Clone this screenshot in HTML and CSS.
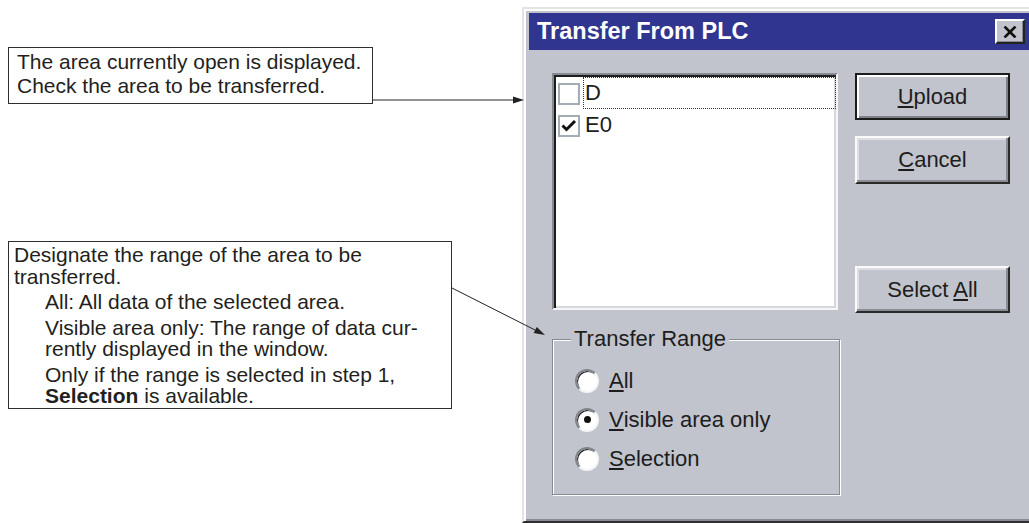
FILE: index.html
```html
<!DOCTYPE html>
<html lang="en">
<head>
    <meta charset="UTF-8">
    <meta name="viewport" content="width=device-width, initial-scale=1.0">
    <title>Transfer From PLC</title>
    <link rel="stylesheet" href="styles.css">
</head>
<body>
    <div class="page">
        <!-- callouts on the left -->
        <div class="notes">
            <div class="note note-area">
                <p>The area currently open is displayed.</p>
                <p>Check the area to be transferred.</p>
            </div>
            <div class="note note-range">
                <p>Designate the range of the area to be<br>transferred.</p>
                <p class="sub">All: All data of the selected area.</p>
                <p class="sub">Visible area only: The range of data cur-<br>rently displayed in the window.</p>
                <p class="sub">Only if the range is selected in step 1,<br><b>Selection</b> is available.</p>
            </div>
        </div>

        <!-- the dialog -->
        <div class="dialog">
            <div class="titlebar">
                <span class="title">Transfer From PLC</span>
                <button class="close-btn" aria-label="Close">
                    <svg width="14" height="12" viewBox="0 0 14 12"><path d="M1.5 0.5 L12.5 11.5 M12.5 0.5 L1.5 11.5" stroke="#111" stroke-width="2.6"/></svg>
                </button>
            </div>
            <div class="dialog-body">
                <div class="left-col">
                    <div class="listbox">
                        <div class="list-item">
                            <span class="check"></span>
                            <span class="item-text focused">D</span>
                        </div>
                        <div class="list-item">
                            <span class="check">
                                <svg width="18" height="18" viewBox="0 0 18 18"><path d="M2.5 8.5 L6.5 12.5 L15 4" fill="none" stroke="#111" stroke-width="3"/></svg>
                            </span>
                            <span class="item-text">E0</span>
                        </div>
                    </div>
                    <fieldset class="range">
                        <legend>Transfer Range</legend>
                        <div class="radios">
                            <label class="radio"><span class="radio-dot"></span><u>A</u>ll</label>
                            <label class="radio"><span class="radio-dot on"></span><u>V</u>isible area only</label>
                            <label class="radio"><span class="radio-dot"></span><u>S</u>election</label>
                        </div>
                    </fieldset>
                </div>
                <div class="buttons">
                    <button class="btn default"><u>U</u>pload</button>
                    <button class="btn cancel"><u>C</u>ancel</button>
                    <button class="btn select-all">Select <u>A</u>ll</button>
                </div>
            </div>
        </div>

        <!-- leader lines -->
        <svg class="arrows" width="1029" height="523" viewBox="0 0 1029 523">
            <line x1="373" y1="100" x2="515" y2="100" stroke="#222" stroke-width="1"/>
            <polygon points="524,100 513,96.5 513,103.5" fill="#222"/>
            <line x1="452" y1="288" x2="536" y2="330.5" stroke="#222" stroke-width="1"/>
            <polygon points="545,335 533.6,333.1 536.8,326.9" fill="#222"/>
        </svg>
    </div>
</body>
</html>
```

FILE: styles.css
```css
html, body { margin: 0; background: #fff; overflow: hidden; }
.page { position: relative; width: 1029px; height: 523px; display: flex; overflow: hidden; font-family: "Liberation Sans", Arial, sans-serif; }

/* callouts */
.notes { flex: none; width: 522px; padding: 47px 0 0 8px; box-sizing: border-box; color: #231f20; font-size: 21px; }
.note { border: 1px solid #2e2e2e; box-sizing: border-box; white-space: nowrap; }
.note p { margin: 0; }
.note-area { width: 365px; height: 57px; padding: 2px 8px; line-height: 24px; }
.note-range { width: 444px; margin-top: 137px; padding: 2px 5px 1px; line-height: 21.5px; }
.note-range .sub { margin: 4px 0 0 31px; }

/* dialog frame */
.dialog { flex: none; width: 514px; height: 516px; margin-top: 7px; box-sizing: border-box; padding: 4px 5px; background: #c1c4cc; border: 2px solid; border-color: #e2e4e8 #2e2e2e #2e2e2e #e2e4e8; box-shadow: inset 2px 2px 0 #fff, inset -2px -2px 0 #898c94; color: #1d1d1d; font-size: 22px; }
.titlebar { height: 37px; display: flex; align-items: center; justify-content: space-between; padding: 0 4px 0 8px; background: #30358f; }
.title { color: #fff; font-weight: bold; font-size: 23.5px; white-space: nowrap; }
.close-btn { width: 30px; height: 25px; padding: 0; display: grid; place-items: center; background: #c1c4cc; border: 2px solid; border-color: #fff #222 #222 #fff; box-shadow: inset -1px -1px 0 #85888f; }

.dialog-body { display: flex; padding: 23px 0 0 23px; }
.left-col { width: 288px; flex: none; }

/* list with check boxes */
.listbox { width: 286px; height: 237px; box-sizing: border-box; padding: 2px; background: #fff; border: 2px solid; border-color: #868a91 #f6f6f8 #f6f6f8 #868a91; box-shadow: inset 2px 2px 0 #1e1e1e, inset -2px -2px 0 #d6d8dd; }
.list-item { height: 32px; display: flex; align-items: center; }
.check { width: 22px; height: 22px; box-sizing: border-box; margin: 2px 3px 0 2px; border: 2px solid #a4acb4; background: #fff; display: grid; place-items: center; }
.item-text { flex: 1; align-self: stretch; display: flex; align-items: center; padding-left: 1px; border: 1px dotted transparent; margin-right: -2px; }
.item-text.focused { border-color: #333; }

/* group box */
.range { margin: 16px 0 0; padding: 0 0 16px; width: 288px; min-width: 0; box-sizing: border-box; border: 1px solid #878a92; box-shadow: 1px 1px 0 #fff, inset 1px 1px 0 #fff; }
.range legend { margin-left: 18px; padding: 0 3px; line-height: 26px; background: #c1c4cc; }
.radios { padding-top: 9px; }
.radio { height: 39px; display: flex; align-items: center; margin-left: 22px; white-space: nowrap; }
.radio-dot { width: 24px; height: 24px; box-sizing: border-box; margin-right: 10px; border-radius: 50%; background: #fff; border: 2px solid; border-color: #80848b #f4f5f7 #f4f5f7 #80848b; box-shadow: inset 1px 1px 0 #222; display: grid; place-items: center; }
.radio-dot.on::after { content: ""; width: 7px; height: 7px; border-radius: 50%; background: #111; }

/* push buttons */
.buttons { display: flex; flex-direction: column; width: 155px; margin-left: 15px; }
.btn { font: inherit; color: #1d1d1d; background: #c1c4cc; padding: 0; border: 2px solid; border-color: #fafafa #2a2a2a #2a2a2a #fafafa; box-shadow: inset -2px -2px 0 #8a8d94, inset 2px 2px 0 #dcdee3; }
.btn.default { height: 47px; border-color: #1c1c1c; box-shadow: inset 2px 2px 0 #fff, inset -2px -2px 0 #7d8188; }
.btn.cancel { height: 48px; margin-top: 16px; }
.btn.select-all { height: 47px; margin-top: 82px; }

.arrows { position: absolute; left: 0; top: 0; pointer-events: none; }
```
